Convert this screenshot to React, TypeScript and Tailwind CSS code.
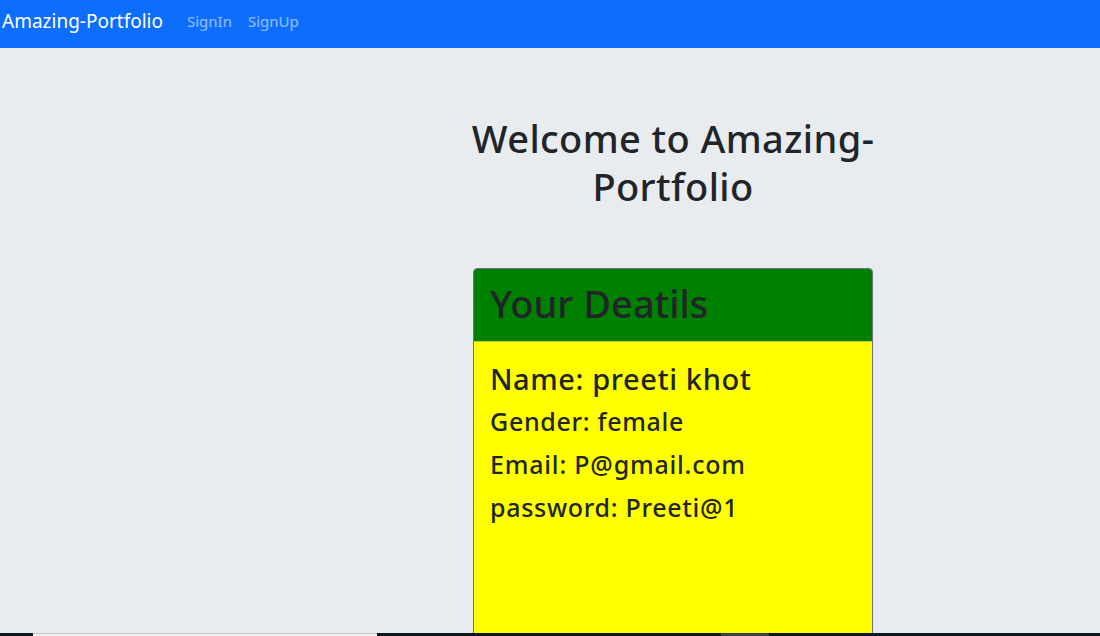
export default function App() {
  return (
    <div
      className="h-[636px] flex flex-col overflow-hidden bg-[#e9ecef] text-[#212529]"
      style={{ fontFamily: '"Noto Sans", "Open Sans", sans-serif' }}
    >
      <nav className="h-12 shrink-0 bg-[#0d6efd] flex items-center pb-[6px]">
        <a className="ml-[2px] mr-6 text-[19px] text-white">Amazing-Portfolio</a>
        <div className="flex gap-4 text-[15px] text-white/55">
          <a>SignIn</a>
          <a>SignUp</a>
        </div>
      </nav>

      <main className="flex-1 overflow-hidden flex pl-[473px]">
        <div className="w-[400px]">
          <h1 className="-mx-3 mt-[66px] text-center text-[38px] font-medium tracking-[0.4px] leading-[48px]">
            Welcome to Amazing-Portfolio
          </h1>

          <div className="mt-[58px] border border-[#6c757d] rounded-[4px] overflow-hidden">
            <div className="bg-[#008000] px-4 pt-[10px] pb-[14px]">
              <h2 className="text-[38px] font-medium leading-[48px]">Your Deatils</h2>
            </div>
            <div className="bg-[#ffff00] border-t border-[#6c757d]/40 px-4 pt-4 h-[400px]">
              <h3 className="text-[29px] font-medium tracking-[0.6px] leading-[42px]">Name: preeti khot</h3>
              <h4 className="text-[25px] font-medium tracking-[0.7px] leading-[43px]">Gender: female</h4>
              <h4 className="text-[25px] font-medium tracking-[0.8px] leading-[43px]">Email: P@gmail.com</h4>
              <h4 className="text-[25px] font-medium tracking-[0.7px] leading-[43px]">password: Preeti@1</h4>
            </div>
          </div>
        </div>
      </main>

      <div className="h-[3px] shrink-0 bg-[#0c1a20] flex">
        <div className="ml-[33px] w-[344px] bg-[#f0f0f0] border-t border-[#c8c8c8]" />
        <div className="ml-[344px] w-[48px] bg-[#3a4248]" />
      </div>
    </div>
  );
}
